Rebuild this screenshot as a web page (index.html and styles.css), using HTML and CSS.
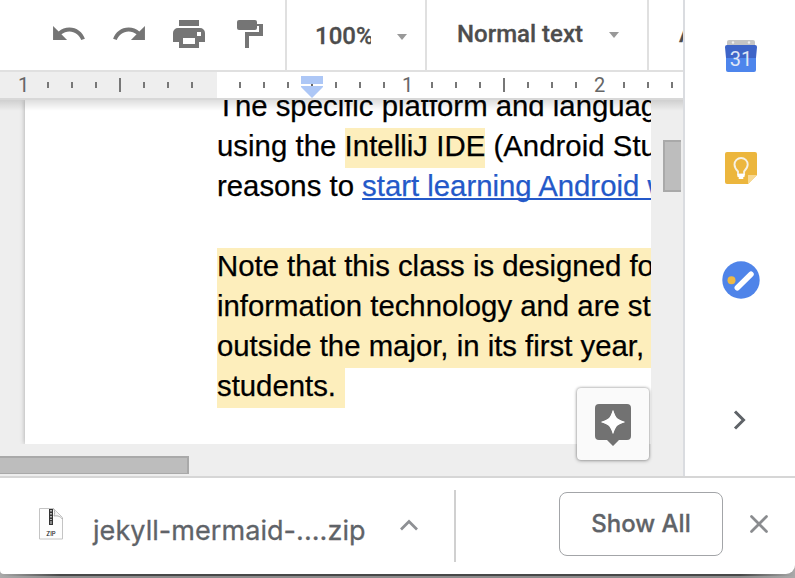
FILE: index.html
```html
<!DOCTYPE html>
<html lang="en">
<head>
<meta charset="utf-8">
<title>Document editor</title>
<link rel="stylesheet" href="styles.css">
</head>
<body>
<div class="window">
  <div class="workspace">
    <main class="editor">
      <header class="toolbar">
        <div class="tools">
          <svg class="undo" width="32" height="14" viewBox="2 7 20.500 9"><path fill="#757575" d="M12.500 8c-2.650 0-5.050.99-6.900 2.600L2 7v9h9l-3.620-3.620c1.390-1.160 3.160-1.880 5.120-1.880 3.540 0 6.550 2.310 7.600 5.500l2.370-.78C21.080 11.030 17.150 8 12.500 8z"/></svg>
          <svg class="redo" width="32" height="14" viewBox="1.500 7 20.500 9"><path fill="#757575" d="M18.400 10.600C16.550 8.990 14.150 8 11.500 8c-4.650 0-8.580 3.030-9.960 7.220L3.900 16c1.050-3.190 4.050-5.500 7.600-5.500 1.950 0 3.730.72 5.120 1.880L13 16h9V7l-3.600 3.600z"/></svg>
          <svg class="print" width="32" height="28" viewBox="0 0 32 28"><path fill="#757575" fill-rule="evenodd" d="M6 0h20v6H6zM5 8h22a5 5 0 0 1 5 5v9h-6v6H6v-6H0v-9a5 5 0 0 1 5-5zm5 10v6h12v-6zm14-6v4h4v-4z"/></svg>
          <svg class="paint" width="27" height="28" viewBox="0 0 27 28"><path fill="#757575" d="M2 0h16a2 2 0 0 1 2 2v2h6v12H12v12H8V12h14V6h-2v2a2 2 0 0 1-2 2H2a2 2 0 0 1-2-2V2a2 2 0 0 1 2-2z"/></svg>
        </div>
        <div class="zoom"><span class="zoom-value">100%</span><i class="caret"></i></div>
        <div class="style"><span class="style-value">Normal text</span><i class="caret"></i></div>
        <div class="font">Arial</div>
      </header>
      <div class="ruler">
        <b>1</b><i></i><i></i><i></i><i class="half"></i><i></i><i></i><i></i><i class="blank"></i><i></i><i></i><i></i><i class="marker"><svg width="22" height="22" viewBox="0 0 22 22"><path fill="#adc7f6" d="M0 0h22v8H0zM0 10h22v1L11 22 0 11z"/><path fill="#666" d="M10 8h2v2h-2z"/></svg></i><i></i><i></i><i></i><b>1</b><i></i><i></i><i></i><i class="half"></i><i></i><i></i><i></i><b>2</b><i></i><i></i><i></i>
      </div>
      <div class="canvas">
        <article class="page">
          <p class="line l1">The specific platform and language</p>
          <p class="line l2">using the <mark class="ide">IntelliJ IDE</mark> (Android Studio)</p>
          <p class="line l3">reasons to <a>start learning Android with</a></p>
          <p class="line"></p>
          <p class="line lit">Note that this class is designed for</p>
          <p class="line lit">information technology and are students</p>
          <p class="line lit">outside the major, in its first year,</p>
          <p class="line"><mark class="last">students.</mark></p>
        </article>
        <div class="scroll-v"></div>
        <div class="scroll-h"></div>
        <div class="explore"><svg width="36" height="42" viewBox="0 0 36 42"><path fill="#727272" d="M4 0h28a4 4 0 0 1 4 4v28a4 4 0 0 1-4 4h-8l-6 6-6-6H4a4 4 0 0 1-4-4V4a4 4 0 0 1 4-4z"/><path fill="#fff" d="M18 6Q20 16 30 18 20 20 18 30 16 20 6 18 16 16 18 6z"/><path fill="#fff" d="M18 6l3.500 8.500L30 18l-8.500 3.500L18 30l-3.500-8.500L6 18l8.500-3.500z"/></svg></div>
      </div>
    </main>
    <aside class="side">
      <svg class="calendar" width="32" height="32" viewBox="0 0 32 32"><path fill="#c4c4c4" d="M4 0h24a2 2 0 0 1 2 2v5H2V2a2 2 0 0 1 2-2z"/><circle cx="8" cy="2.500" r="1.200" fill="#eee"/><circle cx="24" cy="2.500" r="1.200" fill="#eee"/><path fill="#3d64c8" d="M2 5h28q2 0 2 2l-1 11H1L0 7q0-2 2-2z"/><path fill="#4d85ec" d="M1 18h30v12q0 2-2 2H3q-2 0-2-2z"/><text x="16" y="25.500" text-anchor="middle" font-family="Roboto" font-size="20" fill="#dfe6f6">31</text></svg>
      <svg class="keep" width="32" height="32" viewBox="0 0 32 32"><path fill="#ecb63d" d="M2 0h28q2 0 2 2v21l-9 9H2q-2 0-2-2V2q0-2 2-2z"/><path fill="#f8d992" d="M23 23h9l-9 9z"/><path fill="none" stroke="#f6f1e5" stroke-width="1.900" d="M13 19.500C11 17.500 9.500 15.700 9.500 12.600a6.600 6.600 0 0 1 13.200 0c0 3.100-1.700 4.900-3.600 6.900v3H13z"/><path fill="#fff" d="M12.500 22h7v3h-1.200v2h-4.600v-2h-1.200z"/></svg>
      <svg class="tasks" width="38" height="38" viewBox="0 0 38 38"><circle cx="19" cy="19" r="18.700" fill="#4f84e9"/><circle cx="9.500" cy="19.300" r="4" fill="#efb944"/><path stroke="#fff" stroke-width="5.500" stroke-linecap="round" d="M15.300 26.800L29 13.200"/></svg>
      <svg class="chevron" width="14" height="20" viewBox="0 0 14 20"><path fill="none" stroke="#5f6368" stroke-width="3" d="M2 1.500l8.500 8.500L2 18.500"/></svg>
    </aside>
  </div>
  <footer class="downloads">
    <svg class="zip" width="24" height="32" viewBox="0 0 24 32"><path fill="#fdfdfd" stroke="#c4c4c4" d="M.5.500h14l9 9v21.500H.5z"/><path fill="#f5f5f5" stroke="#aaa" d="M14.500.500c2 3 1 6 .5 7.500 3-.500 6 0 8.500 3"/><path fill="#333" d="M10 1h4v16h-4z"/><path stroke="#ddd" stroke-width="1.500" stroke-dasharray="1.500 1.500" d="M12 2v10"/><path fill="#ddd" d="M11.500 13h1v3h-1z"/><text x="12" y="27.500" text-anchor="middle" font-family="Inter" font-weight="500" font-size="6" fill="#222">ZIP</text></svg>
    <span class="filename">jekyll-mermaid-....zip</span>
    <svg class="up" width="18" height="12" viewBox="0 0 18 12"><path fill="none" stroke="#8e9094" stroke-width="2.700" d="M1 10.500l8-8 8 8"/></svg>
    <div class="divider"></div>
    <button class="show">Show All</button>
    <svg class="close" width="18" height="18" viewBox="0 0 18 18"><path stroke="#8a8c8f" stroke-width="2.700" stroke-linecap="round" d="M1.500 1.500l15 15m0-15l-15 15"/></svg>
  </footer>
</div>
</body>
</html>
```

FILE: styles.css
```css
* { box-sizing: border-box; }
body { margin: 0; width: 795px; height: 578px; overflow: hidden; background: linear-gradient(90deg, #aaa, rgba(136,136,136,0) 60px, rgba(136,136,136,0) 740px, #aaa), linear-gradient(#484848 0 576px, #8b8b8b 576px); }
svg { display: block; flex: none; }
.window { height: 574px; background: #fff; border-radius: 0 0 9px 4px; overflow: hidden; }
.workspace { display: flex; height: 476px; }
.editor { width: 683px; display: flex; flex-direction: column; overflow: hidden; }

.toolbar { display: flex; height: 72px; flex: none; border-bottom: 2px solid #e0e0e0; font: 500 24px/28px Roboto, sans-serif; color: #4d4d4d; white-space: nowrap; -webkit-text-stroke: .3px #4d4d4d; }
.toolbar > div { flex: none; }
.tools { display: flex; width: 287px; padding-left: 53px; border-right: 2px solid #e0e0e0; }
.undo { margin-top: 26px; }
.redo { margin: 26px 0 0 28px; }
.print { margin: 20px 0 0 28px; }
.paint { margin: 20px 0 0 32px; }
.zoom { display: flex; width: 140px; padding: 22px 0 0 28px; border-right: 2px solid #e0e0e0; }
.zoom-value { width: 56px; overflow: hidden; }
.caret { width: 10px; height: 6px; margin: 12px 0 0 26px; background: #999; clip-path: polygon(0 0, 100% 0, 50% 100%); }
.style { display: flex; width: 222px; padding: 20px 0 0 30px; border-right: 2px solid #e0e0e0; }
.style-value { width: 126px; }
.style .caret { margin-top: 12px; }
.font { padding: 20px 0 0 30px; }

.ruler { display: flex; flex: none; height: 28px; padding-left: 12px; border-bottom: 2px solid #d8d8d8; background: linear-gradient(90deg, #eee 217px, #fff 217px); font: 20px/26px Roboto, sans-serif; color: #666; }
.ruler > * { flex: none; display: flex; justify-content: center; width: 24px; }
.ruler b { font-weight: 400; padding-right: 1px; }
.ruler i::before { content: ""; width: 2px; height: 6px; margin-top: 10px; background: #777; }
.ruler .half::before { height: 14px; margin-top: 6px; }
.ruler .blank::before, .ruler .marker::before { display: none; }
.marker svg { margin-top: 4px; }

.canvas { position: relative; flex: 1; background: #eee; padding-left: 25px; overflow: hidden; }
.canvas::before { content: ""; position: absolute; z-index: 1; inset: 0 0 auto; height: 11px; background: linear-gradient(rgba(0,0,0,.13), rgba(0,0,0,0)); }
.page { width: 626px; height: 344px; padding-left: 192px; background: #fff; box-shadow: 0 0 5px rgba(0,0,0,.3); clip-path: inset(0 0 0 -8px); overflow: hidden; font: 29.330px/36px "Liberation Sans", Arial, sans-serif; color: #000; -webkit-text-stroke: .25px; }
.line { height: 40px; margin: 0; white-space: nowrap; }
.line:first-child { margin-top: -12px; }
.l2 { letter-spacing: .04px; }
.lit, mark { background: #fdeebc; }
mark { display: inline-block; height: 40px; vertical-align: top; color: inherit; }
.last { width: 128px; }
.line a { color: #2459c9; text-decoration: underline 2px; text-underline-offset: 2px; text-decoration-skip-ink: none; }
.scroll-v { position: absolute; right: 2px; top: 40px; width: 18px; height: 52px; background: #bdbdbd; border: 2px solid #a9a9a9; border-right: 0; }
.scroll-h { position: absolute; left: 0; top: 356px; width: 189px; height: 18px; background: #bdbdbd; border: solid #a9a9a9; border-width: 2px 2px 1px 0; }
.explore { position: absolute; left: 577px; top: 288px; width: 72px; height: 72px; padding: 16px 18px; background: #fafafa; border-radius: 4px; box-shadow: 0 0 3px rgba(0,0,0,.4), 0 1px 4px rgba(0,0,0,.2); }

.side { width: 112px; border-left: 2px solid #dadce0; background: #fff; display: flex; flex-direction: column; align-items: center; padding: 40px 0 0 2px; }
.keep { margin-top: 80px; }
.tasks { margin-top: 77px; }
.chevron { margin: 111px 2px 0 0; }

.downloads { display: flex; align-items: flex-start; height: 98px; border-top: 2px solid #d6d6d6; padding-left: 39px; font-family: Inter, sans-serif; color: #5f6368; }
.zip { margin-top: 30px; }
.filename { width: 273px; margin: 35px 0 0 30px; font-size: 27px; line-height: 36px; letter-spacing: .06px; white-space: nowrap; -webkit-text-stroke: .3px; }
.up { margin: 41px 0 0 34px; }
.divider { width: 2px; height: 72px; margin: 12px 0 0 36px; background: #d0d0d0; }
.show { width: 164px; height: 64px; margin: 14px 0 0 103px; padding: 0 0 1px; background: #fff; border: 1px solid #a3a5a8; border-radius: 8px; font: 500 24px Inter, sans-serif; color: #5f6368; -webkit-text-stroke: .3px; }
.close { margin: 37px 0 0 27px; }
```
